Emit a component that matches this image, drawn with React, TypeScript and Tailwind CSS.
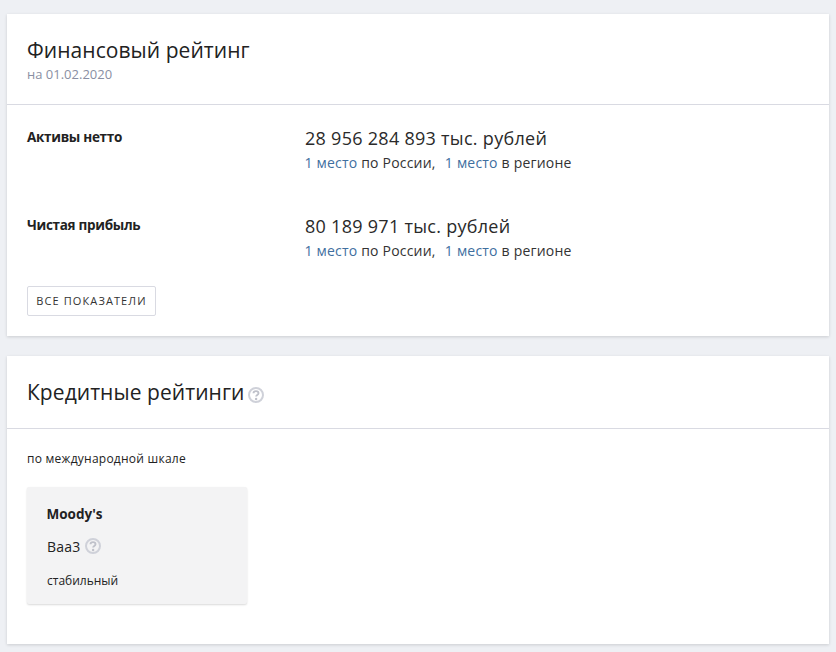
const Q = ({ s = 16 }: { s?: number }) => (
  <svg width={s} height={s} viewBox="0 0 16 16" className="shrink-0">
    <circle cx="8" cy="8" r="7" fill="none" stroke="#cfd1d9" strokeWidth="2" />
    <path d="M5.5 6.3c0-1.4 1.1-2.2 2.5-2.2s2.5.8 2.5 2.1c0 1.8-2.4 1.8-2.4 3.4" fill="none" stroke="#bfc1ca" strokeWidth="1.9" />
    <circle cx="8.1" cy="12" r="1.2" fill="#bfc1ca" />
  </svg>
);

const Rank = () => (
  <div className="text-[14px] leading-[20px] text-[#333] mt-[3px] -ml-[0.5px] tracking-[0.2px] whitespace-pre">
    <span className="text-[#3f6f9f]">1 место</span> по России,{"  "}
    <span className="text-[#3f6f9f] ml-[1.5px]">1 место</span> в регионе
  </div>
);

const Row = ({ label, value, cls }: { label: string; value: string; cls: string }) => (
  <div className={`flex ${cls}`}>
    <div className="w-[278px] text-[13.5px] leading-[20px] font-bold text-[#222] tracking-[-0.3px] pt-[1px]">{label}</div>
    <div>
      <div className="text-[18px] leading-[24px] text-[#2a2a2a] tracking-[0.28px]">{value}</div>
      <Rank />
    </div>
  </div>
);

export default function App() {
  return (
    <div className="w-[836px] h-[652px] overflow-hidden bg-[#eef0f4] px-[7px] pt-[14px] font-['Open_Sans','Noto_Sans',sans-serif]">
      <section className="bg-white h-[322px] shadow-[0_1px_3px_rgba(0,0,0,0.15)]">
        <div className="h-[91px] px-[20px] pt-[22px] border-b border-[#d9dae2]">
          <h2 className="text-[21px] leading-[28px] text-[#222] tracking-[0.06px]">Финансовый рейтинг</h2>
          <div className="text-[13px] leading-[18px] text-[#8a8fa3] mt-[1px]">на 01.02.2020</div>
        </div>
        <div className="px-[20px] pt-[21px]">
          <Row label="Активы нетто" value="28 956 284 893 тыс. рублей" cls="h-[88px]" />
          <Row label="Чистая прибыль" value="80 189 971 тыс. рублей" cls="h-[72px]" />
          <button className="block h-[30px] w-[129px] border border-[#d9dae2] rounded-[2px] text-[11px] tracking-[1.1px] text-[#333] text-center">
            ВСЕ ПОКАЗАТЕЛИ
          </button>
        </div>
      </section>
      <section className="bg-white h-[288px] mt-[20px] shadow-[0_1px_3px_rgba(0,0,0,0.15)]">
        <div className="h-[73px] px-[20px] pt-[22px] border-b border-[#d9dae2] flex items-start gap-[4px]">
          <h2 className="text-[21px] leading-[28px] text-[#222] tracking-[0.06px]">Кредитные рейтинги</h2>
          <div className="pt-[9px]"><Q /></div>
        </div>
        <div className="px-[20px] pt-[20px]">
          <div className="text-[12px] leading-[20px] text-[#222] tracking-[0.25px]">по международной шкале</div>
          <div className="mt-[18px] w-[220px] h-[117px] bg-[#f3f3f4] rounded-[2px] shadow-[0_1px_2px_rgba(0,0,0,0.15)] px-[20px] pt-[17px]">
            <div className="text-[13.5px] leading-[20px] font-bold text-[#222] -ml-[0.5px]">Moody's</div>
            <div className="flex items-center gap-[5px] mt-[12px] h-[20px] text-[14px] text-[#222] tracking-[0.2px]">Baa3 <Q /></div>
            <div className="text-[12px] leading-[18px] text-[#222] mt-[16px]">стабильный</div>
          </div>
        </div>
      </section>
    </div>
  );
}
